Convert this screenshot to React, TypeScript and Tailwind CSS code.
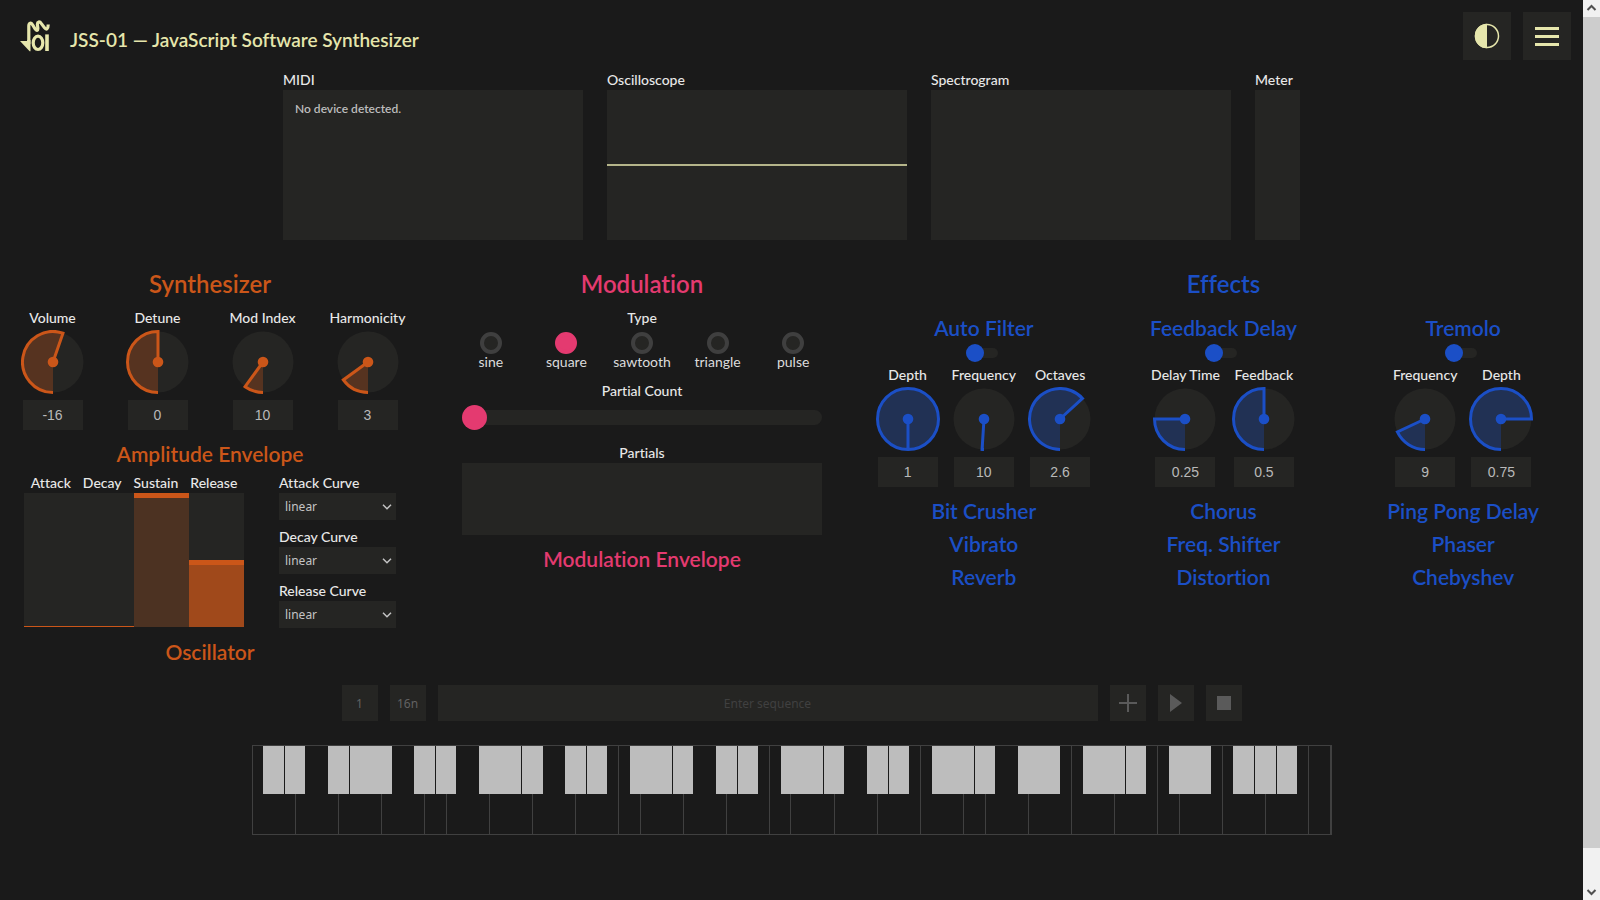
import { useState, type ReactNode } from "react";

type Tone = "orange" | "blue";

const toneText: Record<Tone, string> = {
  orange: "text-[#cb5619]",
  blue: "text-[#1b4fc6]",
};

function Label({ children, htmlFor }: { children: ReactNode; htmlFor?: string }) {
  const cls = "block whitespace-nowrap text-[14px] leading-5 font-medium text-[#e8e8e8]";
  return htmlFor ? (
    <label htmlFor={htmlFor} className={cls}>
      {children}
    </label>
  ) : (
    <span className={cls}>{children}</span>
  );
}

function Knob({ id, label, value, turn, tone }: { id: string; label: string; value: string; turn: number; tone: Tone }) {
  const [current, setCurrent] = useState(value);
  const angle = turn * 2 * Math.PI;
  const x = 32 - 30.5 * Math.sin(angle);
  const y = 32 + 30.5 * Math.cos(angle);
  const arc =
    turn >= 1
      ? "M32 62.5A30.5 30.5 0 0 1 32 1.5A30.5 30.5 0 0 1 32 62.5L32 32"
      : `M32 62.5A30.5 30.5 0 ${turn > 0.5 ? 1 : 0} 1 ${x} ${y}L32 32`;
  return (
    <div className="flex min-w-16 flex-col items-center">
      <Label htmlFor={id}>{label}</Label>
      <svg viewBox="0 0 64 64" className={`mt-0.5 size-16 ${toneText[tone]}`} aria-hidden="true">
        <circle cx="32" cy="32" r="30.5" fill="#252523" />
        <path d={arc} fill="currentColor" fillOpacity="0.3" stroke="currentColor" strokeWidth="3" />
        <circle cx="32" cy="32" r="5.3" fill="currentColor" />
      </svg>
      <input
        id={id}
        type="text"
        inputMode="decimal"
        value={current}
        onChange={(e) => setCurrent(e.target.value)}
        className="mt-1.5 h-[30px] w-[60px] bg-[#252523] text-center font-['Liberation_Sans',sans-serif] text-[14px] text-[#b9b9b9] outline-none"
      />
    </div>
  );
}

function Panel({ title, className, children }: { title: string; className: string; children?: ReactNode }) {
  return (
    <section className={className}>
      <Label>{title}</Label>
      <div className="flex h-[150px] flex-col bg-[#252523]">{children}</div>
    </section>
  );
}

function SectionTitle({ children, className }: { children: ReactNode; className: string }) {
  return <h2 className={`pb-1 text-center text-[24px] leading-10 font-semibold ${className}`}>{children}</h2>;
}

function SubTitle({ children, className }: { children: ReactNode; className: string }) {
  return <h3 className={`text-center text-[21px] leading-[33px] font-semibold ${className}`}>{children}</h3>;
}

function CurveSelect({ id, label }: { id: string; label: string }) {
  return (
    <div>
      <Label htmlFor={id}>{label}</Label>
      <div className="grid items-center">
        <select
          id={id}
          className="col-start-1 row-start-1 h-[27px] w-[117px] appearance-none bg-[#252523] pl-1.5 font-['Noto_Sans',sans-serif] text-[12px] text-[#c4c4c4] outline-none"
        >
          <option>linear</option>
          <option>exponential</option>
        </select>
        <svg
          viewBox="0 0 10 6"
          className="pointer-events-none col-start-1 row-start-1 mr-1 h-1.5 w-2.5 justify-self-end"
          fill="none"
          stroke="#c4c4c4"
          strokeWidth="1.5"
          aria-hidden="true"
        >
          <path d="M1 0.8L5 4.8L9 0.8" />
        </svg>
      </div>
    </div>
  );
}

function Synthesizer() {
  const orange = "text-[#cb5619]";
  return (
    <section>
      <SectionTitle className={orange}>Synthesizer</SectionTitle>
      <div className="grid grid-cols-4">
        <Knob id="volume" label="Volume" value="-16" turn={0.553} tone="orange" />
        <Knob id="detune" label="Detune" value="0" turn={0.5} tone="orange" />
        <Knob id="mod-index" label="Mod Index" value="10" turn={0.1} tone="orange" />
        <Knob id="harmonicity" label="Harmonicity" value="3" turn={0.15} tone="orange" />
      </div>
      <div className="pt-[7px]">
        <SubTitle className={orange}>Amplitude Envelope</SubTitle>
      </div>
      <div className="flex justify-between px-6 pt-[3px]">
        <div className="w-[220px]">
          <div className="flex justify-center gap-3">
            <Label>Attack</Label>
            <Label>Decay</Label>
            <Label>Sustain</Label>
            <Label>Release</Label>
          </div>
          <div className="grid h-[134px] grid-cols-4 items-end bg-[#252523]">
            <div className="h-px bg-[#cb5619]" />
            <div className="h-px bg-[#cb5619]" />
            <div className="h-full border-t-5 border-[#cb5619] bg-[#4c3222]" />
            <div className="h-[67px] border-t-5 border-[#cb5619] bg-[#a0491b]" />
          </div>
        </div>
        <div className="flex flex-col gap-[7px]">
          <CurveSelect id="attack-curve" label="Attack Curve" />
          <CurveSelect id="decay-curve" label="Decay Curve" />
          <CurveSelect id="release-curve" label="Release Curve" />
        </div>
      </div>
      <div className="pt-[7px]">
        <SubTitle className={orange}>Oscillator</SubTitle>
      </div>
    </section>
  );
}

function Modulation() {
  const pink = "text-[#e43a70]";
  return (
    <section className="flex flex-col items-center">
      <SectionTitle className={pink}>Modulation</SectionTitle>
      <fieldset className="w-full max-w-[378px]">
        <legend className="mx-auto">
          <Label>Type</Label>
        </legend>
        <div className="grid grid-cols-5 pt-1">
          {["sine", "square", "sawtooth", "triangle", "pulse"].map((t) => (
            <label key={t} className="flex flex-col items-center text-[14px] leading-4 text-[#dcdcdc]">
              <input
                type="radio"
                name="modulation-type"
                defaultChecked={t === "square"}
                className="size-[22px] appearance-none rounded-full border-4 border-[#3f3f3f] bg-[#252523] checked:border-[#e43a70] checked:bg-[#e43a70]"
              />
              {t}
            </label>
          ))}
        </div>
      </fieldset>
      <div className="flex w-full max-w-[360px] flex-col items-center pt-[11px]">
        <Label htmlFor="partial-count">Partial Count</Label>
        <input
          id="partial-count"
          type="range"
          min={0}
          max={32}
          defaultValue={0}
          className="mt-1 h-[25px] w-full appearance-none bg-transparent [&::-webkit-slider-runnable-track]:h-[15px] [&::-webkit-slider-runnable-track]:rounded-full [&::-webkit-slider-runnable-track]:bg-[#252523] [&::-webkit-slider-thumb]:-mt-[5px] [&::-webkit-slider-thumb]:size-[25px] [&::-webkit-slider-thumb]:appearance-none [&::-webkit-slider-thumb]:rounded-full [&::-webkit-slider-thumb]:bg-[#e43a70]"
        />
      </div>
      <div className="flex w-full max-w-[360px] flex-col items-center pt-[13px]">
        <Label>Partials</Label>
        <div className="h-[72px] w-full bg-[#252523]" />
      </div>
      <div className="pt-[7px]">
        <SubTitle className={pink}>Modulation Envelope</SubTitle>
      </div>
    </section>
  );
}

function EffectColumn({ title, children, others }: { title: string; children: ReactNode; others: string[] }) {
  const blue = "text-[#1b4fc6]";
  return (
    <div className="flex flex-col items-center">
      <SubTitle className={blue}>{title}</SubTitle>
      <input
        type="range"
        min={0}
        max={1}
        defaultValue={0}
        aria-label={title}
        className="mr-1 h-[18px] w-8 appearance-none bg-transparent [&::-webkit-slider-runnable-track]:h-[10px] [&::-webkit-slider-runnable-track]:rounded-full [&::-webkit-slider-runnable-track]:bg-[#252523] [&::-webkit-slider-thumb]:-mt-1 [&::-webkit-slider-thumb]:size-[18px] [&::-webkit-slider-thumb]:appearance-none [&::-webkit-slider-thumb]:rounded-full [&::-webkit-slider-thumb]:bg-[#1b4fc6]"
      />
      <div className="flex gap-3 pt-[3px] pb-[7px]">{children}</div>
      {others.map((o) => (
        <SubTitle key={o} className={blue}>
          {o}
        </SubTitle>
      ))}
    </div>
  );
}

function Effects() {
  return (
    <section>
      <SectionTitle className="text-[#1b4fc6]">Effects</SectionTitle>
      <div className="grid grid-cols-3 pt-[3px]">
        <EffectColumn title="Auto Filter" others={["Bit Crusher", "Vibrato", "Reverb"]}>
          <Knob id="af-depth" label="Depth" value="1" turn={1} tone="blue" />
          <Knob id="af-frequency" label="Frequency" value="10" turn={0.01} tone="blue" />
          <Knob id="af-octaves" label="Octaves" value="2.6" turn={0.632} tone="blue" />
        </EffectColumn>
        <EffectColumn title="Feedback Delay" others={["Chorus", "Freq. Shifter", "Distortion"]}>
          <Knob id="fd-time" label="Delay Time" value="0.25" turn={0.25} tone="blue" />
          <Knob id="fd-feedback" label="Feedback" value="0.5" turn={0.5} tone="blue" />
        </EffectColumn>
        <EffectColumn title="Tremolo" others={["Ping Pong Delay", "Phaser", "Chebyshev"]}>
          <Knob id="tr-frequency" label="Frequency" value="9" turn={0.18} tone="blue" />
          <Knob id="tr-depth" label="Depth" value="0.75" turn={0.75} tone="blue" />
        </EffectColumn>
      </div>
    </section>
  );
}

function Sequencer() {
  const box = "h-9 bg-[#252523] text-center font-['Noto_Sans',sans-serif] text-[12px] text-[#626262] outline-none";
  const button = "flex size-9 shrink-0 items-center justify-center bg-[#252523] text-[#5a5a5a]";
  return (
    <form className="mx-auto flex w-full max-w-[900px] gap-3" onSubmit={(e) => e.preventDefault()}>
      <input aria-label="Sequence number" defaultValue="1" className={`${box} w-9`} />
      <input aria-label="Note length" defaultValue="16n" className={`${box} w-9`} />
      <input
        aria-label="Sequence"
        placeholder="Enter sequence"
        className={`${box} min-w-0 flex-1 placeholder:text-[#404040]`}
      />
      <button type="button" aria-label="Add" className={button}>
        <svg viewBox="0 0 18 18" className="size-[18px]" stroke="currentColor" strokeWidth="2">
          <path d="M9 0V18M0 9H18" />
        </svg>
      </button>
      <button type="button" aria-label="Play" className={button}>
        <svg viewBox="0 0 12 18" className="h-[18px] w-3" fill="currentColor">
          <path d="M0 0L12 9L0 18Z" />
        </svg>
      </button>
      <button type="button" aria-label="Stop" className={button}>
        <svg viewBox="0 0 14 14" className="size-3.5" fill="currentColor">
          <path d="M0 0H14V14H0Z" />
        </svg>
      </button>
    </form>
  );
}

/* Key spans are counted in hundredths of the keyboard's width. */
const whiteKeys = [4, 4, 4, 4, 2, 4, 4, 4, 4, 2, 4, 4, 4, 2, 4, 4, 4, 4, 2, 4, 4, 4, 4, 2, 4, 4, 4, 2];
const blackKeys: [number, number][] = [
  [1, 2], [3, 2], [7, 2], [9, 4], [15, 2], [17, 2], [21, 4], [25, 2], [29, 2], [31, 2], [35, 4], [39, 2],
  [43, 2], [45, 2], [49, 4], [53, 2], [57, 2], [59, 2], [63, 4], [67, 2], [71, 4], [77, 4], [81, 2],
  [85, 4], [91, 2], [93, 2], [95, 2],
];

function Keyboard() {
  return (
    <div className="relative mx-auto h-[90px] w-full max-w-[1080px] border border-[#404040]">
      <div className="grid h-full grid-cols-[repeat(100,minmax(0,1fr))]">
        {whiteKeys.map((span, i) => (
          <button
            key={i}
            type="button"
            aria-label={`White key ${i + 1}`}
            className="border-r border-[#404040] last:-mr-px"
            style={{ gridColumn: `span ${span}` }}
          />
        ))}
      </div>
      <div className="absolute inset-x-0 top-0 grid h-12 grid-cols-[repeat(100,minmax(0,1fr))]">
        {blackKeys.map(([start, span], i) => (
          <button
            key={i}
            type="button"
            aria-label={`Black key ${i + 1}`}
            className="row-start-1 mr-px bg-[#bdbdbd]"
            style={{ gridColumn: `${start + 1} / span ${span}` }}
          />
        ))}
      </div>
    </div>
  );
}

function Header() {
  const button = "flex size-12 items-center justify-center bg-[#252523] text-[#e6e6ac]";
  return (
    <header className="flex items-center justify-between px-3 pt-3 pb-2.5">
      <div className="flex items-center gap-5 pl-2 text-[#e6e6ac]">
        <svg viewBox="0 0 30 32" className="h-8 w-[30px]" fill="none" stroke="currentColor" aria-hidden="true">
          <path
            d="M8.8 24V6C8.8 2.6 11 2.4 12.6 4.8L15 8.8C16.6 11.4 18.2 10.8 17.8 7.6L17.4 4.6C17.2 1.6 19.6 1 21.4 3.6L24.4 7.6C26.4 10.2 28.2 9 28.2 4.6"
            strokeWidth="3.2"
          />
          <path d="M0 21H7.1V20H10.5V31.2H9.6Z" fill="currentColor" stroke="none" />
          <ellipse cx="18" cy="22.8" rx="4.8" ry="6.7" strokeWidth="3.2" />
          <path d="M27 14.4V31" strokeWidth="3.6" />
        </svg>
        <h1 className="pt-2 text-[19px] leading-6 font-semibold">JSS-01 — JavaScript Software Synthesizer</h1>
      </div>
      <div className="flex gap-3">
        <button type="button" aria-label="Toggle theme" className={button}>
          <svg viewBox="0 0 26 26" className="size-[26px]">
            <circle cx="13" cy="13" r="11.5" fill="none" stroke="currentColor" strokeWidth="1.5" />
            <path d="M13 0.8A12.2 12.2 0 0 0 13 25.2Z" fill="currentColor" />
          </svg>
        </button>
        <button type="button" aria-label="Menu" className={button}>
          <svg viewBox="0 0 24 19" className="h-[19px] w-6" fill="currentColor">
            <path d="M0 0H24V3H0ZM0 8H24V11H0ZM0 16H24V19H0Z" />
          </svg>
        </button>
      </div>
    </header>
  );
}

function ScrollBar() {
  return (
    <div className="sticky top-0 flex h-screen w-[17px] shrink-0 flex-col bg-[#f1f1f1]" aria-hidden="true">
      <svg viewBox="0 0 17 17" className="size-[17px]" fill="none" stroke="#505050" strokeWidth="2">
        <path d="M4.5 10L8.5 6L12.5 10" />
      </svg>
      <div className="grow-[831] bg-[#cdcdcd]" />
      <div className="grow-[35]" />
      <svg viewBox="0 0 17 17" className="size-[17px]" fill="none" stroke="#505050" strokeWidth="2">
        <path d="M4.5 7L8.5 11L12.5 7" />
      </svg>
    </div>
  );
}

export default function App() {
  return (
    <div className="flex min-h-screen bg-[#1a1a1a] font-['Lato',sans-serif] [font-variant-ligatures:none]">
      <div className="min-w-0 flex-1">
        <Header />
        <main>
          <div className="flex justify-center gap-6">
            <Panel title="MIDI" className="w-[300px]">
              <p className="px-3 pt-2.5 text-[12px] leading-[18px] font-semibold text-[#bdbdbd]">No device detected.</p>
            </Panel>
            <Panel title="Oscilloscope" className="w-[300px]">
              <div className="my-auto h-0.5 bg-[#b5b58a]" />
            </Panel>
            <Panel title="Spectrogram" className="w-[300px]" />
            <Panel title="Meter" className="w-[45px]" />
          </div>
          <div className="grid grid-cols-[420fr_444fr_719fr] pt-6">
            <Synthesizer />
            <Modulation />
            <Effects />
          </div>
          <div className="flex flex-col gap-6 pt-[17px]">
            <Sequencer />
            <Keyboard />
          </div>
        </main>
      </div>
      <ScrollBar />
    </div>
  );
}
